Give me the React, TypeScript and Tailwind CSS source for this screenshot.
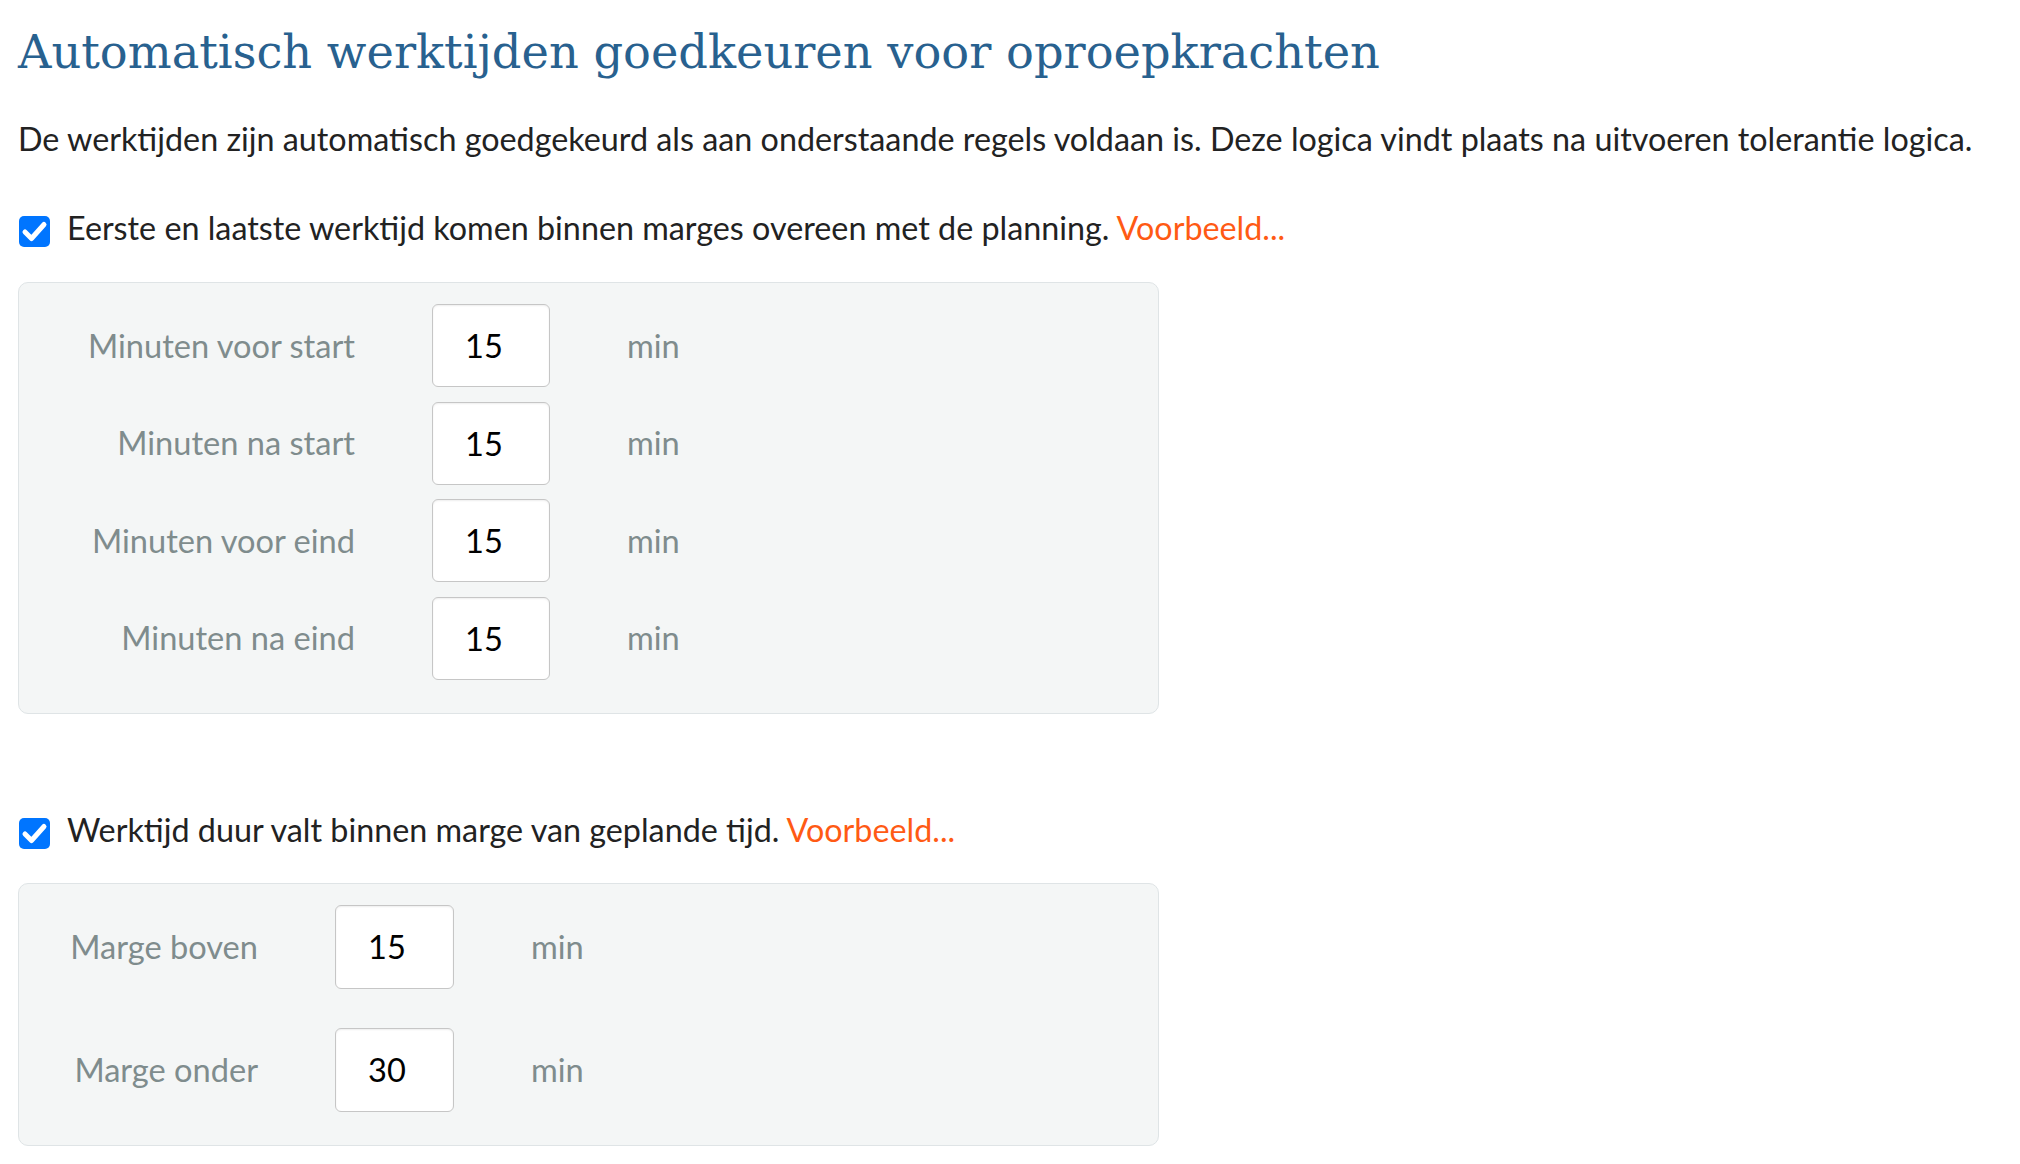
import { useState } from 'react';

type Field = { label: string; value: string };

const startEnd: Field[] = [
  { label: 'Minuten voor start', value: '15' },
  { label: 'Minuten na start', value: '15' },
  { label: 'Minuten voor eind', value: '15' },
  { label: 'Minuten na eind', value: '15' },
];

const duration: Field[] = [
  { label: 'Marge boven', value: '15' },
  { label: 'Marge onder', value: '30' },
];

function Check({ checked, onToggle }: { checked: boolean; onToggle: () => void }) {
  return (
    <button
      type="button"
      onClick={onToggle}
      className={`ml-[1px] mt-[8px] flex h-[31px] w-[31px] shrink-0 items-center justify-center rounded-[5px] ${
        checked ? 'bg-[#0075ff]' : 'border-2 border-[#767676] bg-white'
      }`}
    >
      {checked && (
        <svg width="31" height="31" viewBox="0 0 31 31">
          <polyline
            points="6,16 12.5,22.5 25,8.5"
            fill="none"
            stroke="white"
            strokeWidth="5"
            strokeLinecap="round"
            strokeLinejoin="round"
          />
        </svg>
      )}
    </button>
  );
}

function RuleRow({ text, checked, onToggle }: { text: string; checked: boolean; onToggle: () => void }) {
  return (
    <div className="flex items-start gap-[17px]">
      <Check checked={checked} onToggle={onToggle} />
      <p className="text-[32.3px] leading-[40px] text-[#222] whitespace-nowrap">
        {text} <a href="#" className="text-[#ff5a14]">Voorbeeld...</a>
      </p>
    </div>
  );
}

function Panel({ fields, labelWidth, inputWidth, inputHeight, gap }: {
  fields: Field[];
  labelWidth: string;
  inputWidth: string;
  inputHeight: string;
  gap: string;
}) {
  const [values, setValues] = useState(fields.map((f) => f.value));
  return (
    <div className={`flex w-[1141px] flex-col rounded-[10px] border border-[#dfe4e6] bg-[#f4f6f6] pt-[21px] pb-[33px] ${gap}`}>
      {fields.map((f, i) => (
        <div key={f.label} className="flex items-center">
          <label className={`${labelWidth} text-right text-[32.6px] leading-[40px] text-[#7f8c8d]`}>{f.label}</label>
          <input
            value={values[i]}
            onChange={(e) => setValues(values.map((v, j) => (j === i ? e.target.value : v)))}
            className={`ml-[77px] ${inputWidth} ${inputHeight} rounded-[6px] border-[1.5px] border-[#c6c6c6] bg-white pl-[32px] text-[32.6px] text-black shadow-[inset_0_1px_2px_rgba(0,0,0,0.07)] outline-none`}
          />
          <span className="ml-[77px] text-[32.6px] leading-[40px] text-[#7f8c8d]">min</span>
        </div>
      ))}
    </div>
  );
}

export default function App() {
  const [first, setFirst] = useState(true);
  const [second, setSecond] = useState(true);

  return (
    <div className="min-h-screen bg-white pl-[18px] font-['Lato','Noto_Sans',sans-serif]">
      <h1 className="pt-[24px] font-['DejaVu_Serif',serif] text-[46.3px] font-light leading-[56px] text-[#28618f] whitespace-nowrap">
        Automatisch werktijden goedkeuren voor oproepkrachten
      </h1>

      <p className="mt-[39px] text-[32.3px] leading-[40px] text-[#222] whitespace-nowrap">
        De werktijden zijn automatisch goedgekeurd als aan onderstaande regels voldaan is. Deze logica vindt plaats na uitvoeren tolerantie logica.
      </p>

      <div className="mt-[49px]">
        <RuleRow
          text="Eerste en laatste werktijd komen binnen marges overeen met de planning."
          checked={first}
          onToggle={() => setFirst(!first)}
        />
      </div>

      <div className="mt-[34px]">
        <Panel fields={startEnd} labelWidth="w-[336px]" inputWidth="w-[118px]" inputHeight="h-[83px]" gap="gap-[14.5px]" />
      </div>

      <div className="mt-[96px]">
        <RuleRow
          text="Werktijd duur valt binnen marge van geplande tijd."
          checked={second}
          onToggle={() => setSecond(!second)}
        />
      </div>

      <div className="mt-[33px]">
        <Panel fields={duration} labelWidth="w-[239px]" inputWidth="w-[119px]" inputHeight="h-[84px]" gap="gap-[39px]" />
      </div>
    </div>
  );
}
